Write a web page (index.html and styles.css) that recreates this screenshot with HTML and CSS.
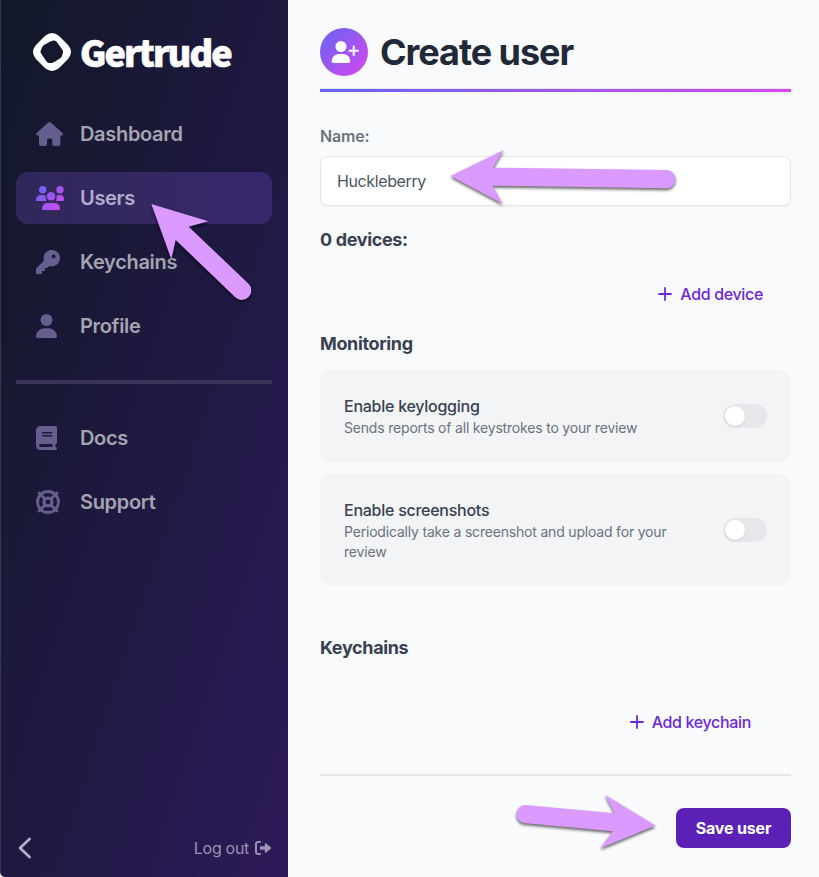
FILE: index.html
```html
<!DOCTYPE html>
<html lang="en">
<head>
<meta charset="utf-8">
<title>Gertrude</title>
<link rel="stylesheet" href="styles.css">
</head>
<body>
<div class="app">
  <aside class="sidebar">
    <div class="brand">
      <svg class="brand-mark" viewBox="0 0 38 38"><path fill="#fff" fill-rule="evenodd" d="M12.200 2.700Q19-2.700 25.800 2.700L35.300 12.200Q40.700 19 35.300 25.800L25.800 35.300Q19 40.700 12.200 35.300L2.700 25.800Q-2.700 19 2.700 12.200ZM18.500 8L11.300 11.700Q9.500 12.700 9 14.500L7.700 17.800Q7.300 19.200 8.100 20.500L13.300 28.300Q14.500 30 16.300 30L18.500 29.900Q20 29.800 21.300 29L27.200 25.300Q28.500 24.400 29 22.700L29.900 19.900Q30.300 18.300 29.400 16.800L23.800 9Q22.800 7.800 21.200 7.600Q19.700 7.400 18.500 8Z"/></svg>
      <span class="brand-name">Gertrude</span>
    </div>
    <nav class="nav">
      <a class="item"><svg class="icon" width="28" height="24" viewBox="0 0 28 24"><path fill="currentColor" d="M12.300.5Q13.500-.5 14.700.5L26.500 11Q27.500 12.200 26.300 13.400H24.300V22Q24.300 24 22.300 24H18.300Q16.300 24 16.300 22V18Q16.300 16.500 14.800 16.500H12.500Q11 16.500 11 18V22Q11 24 9 24H5Q3 24 3 22V13.400H1Q-.5 12.500.6 11Z"/></svg><span>Dashboard</span></a>
      <a class="item active"><svg class="icon" width="28" height="24" viewBox="0 0 28 24"><defs><linearGradient id="users" x1="0" y1="0" x2="28" y2="24" gradientUnits="userSpaceOnUse"><stop stop-color="#6366f1"/><stop offset="1" stop-color="#d946ef"/></linearGradient></defs><g fill="url(#users)"><circle cx="6.700" cy="3.700" r="3.700"/><circle cx="24" cy="3.700" r="3.700"/><circle cx="15" cy="10.300" r="4.300"/><path d="M1.200 15Q0 15 0 13.800Q.3 9 5 9H7.500Q9 9 9.700 9.500Q9 12.500 10.500 15ZM20 15Q21 12.500 20.500 9.700Q21.500 9 23 9H24.500Q28 9 28 13.500Q28 15 27 15ZM11.500 17H18.500Q23.500 17 24 22.500Q24 24 22.500 24H7.500Q6 24 6 22.500Q6.500 17 11.500 17Z"/></g></svg><span>Users</span></a>
      <a class="item"><svg class="icon" width="24" height="24" viewBox="0 0 512 512"><path fill="currentColor" fill-rule="evenodd" d="M336 352c97.200 0 176-78.800 176-176S433.200 0 336 0S160 78.800 160 176c0 18.700 2.900 36.800 8.300 53.700L7 391c-4.500 4.500-7 10.600-7 17v80c0 13.300 10.700 24 24 24h80c13.300 0 24-10.700 24-24V448h40c13.300 0 24-10.700 24-24V384h40c6.400 0 12.500-2.500 17-7l33.300-33.300c16.900 5.400 35 8.300 53.700 8.300zM376 96a40 40 0 1 1 0 80 40 40 0 1 1 0-80z"/></svg><span>Keychains</span></a>
      <a class="item"><svg class="icon" width="21" height="24" viewBox="0 0 448 512"><g fill="currentColor"><circle cx="224" cy="128" r="128"/><path d="M178.300 304C79.800 304 0 383.800 0 482.300C0 498.700 13.300 512 29.700 512H418.300c16.400 0 29.700-13.300 29.700-29.700C448 383.800 368.200 304 269.700 304H178.300z"/></g></svg><span>Profile</span></a>
    </nav>
    <div class="rule"></div>
    <nav class="nav">
      <a class="item"><svg class="icon" width="21" height="24" viewBox="0 0 448 512"><path fill="currentColor" fill-rule="evenodd" d="M96 0C43 0 0 43 0 96V416c0 53 43 96 96 96H416c17.700 0 32-14.300 32-32s-14.300-32-32-32V384c17.700 0 32-14.300 32-32V32c0-17.700-14.300-32-32-32H96zm0 384H352v64H96c-17.700 0-32-14.300-32-32s14.300-32 32-32zm32-240c0-8.800 7.200-16 16-16H336c8.800 0 16 7.200 16 16s-7.200 16-16 16H144c-8.800 0-16-7.200-16-16zm16 48H336c8.800 0 16 7.200 16 16s-7.200 16-16 16H144c-8.800 0-16-7.200-16-16s7.200-16 16-16z"/></svg><span>Docs</span></a>
      <a class="item"><svg class="icon" width="24" height="24" viewBox="0 0 24 24"><g fill="none" stroke="currentColor"><circle cx="12" cy="12" r="10.500" stroke-width="2.800"/><circle cx="12" cy="12" r="4" stroke-width="3.200"/><path stroke-width="2.800" stroke-linecap="round" d="M3 3L8.800 8.800M21 3L15.200 8.800M3 21L8.800 15.200M21 21L15.200 15.200"/></g></svg><span>Support</span></a>
    </nav>
    <div class="side-foot">
      <svg width="16" height="22" viewBox="0 0 16 22"><path d="M13.500 2L4 11L13.500 20" fill="none" stroke="#b5afc4" stroke-width="2.800" stroke-linecap="round" stroke-linejoin="round"/></svg>
      <a class="logout"><span>Log out</span><svg width="17" height="14" viewBox="0 0 17 14"><path d="M5 1H3Q1 1 1 3V11Q1 13 3 13H5" fill="none" stroke="currentColor" stroke-width="2" stroke-linecap="round"/><path fill="currentColor" d="M5.500 5.300H9.800V3Q10.200 1.600 11.300 2.400L16 6.400Q16.500 7 16 7.600L11.300 11.600Q10.200 12.400 9.800 11V8.700H5.500Q5 8.700 5 8.200V5.800Q5 5.300 5.500 5.300Z"/></svg></a>
    </div>
  </aside>
  <main class="main">
    <header class="head">
      <span class="badge"><svg width="28" height="22" viewBox="0 0 28 22"><g fill="#fff"><circle cx="10" cy="5.500" r="5.500"/><path d="M7.500 13H12.500Q18.600 13.500 19.300 20Q19.300 22 17.500 22H2.300Q.6 22 .6 20Q1.500 13.500 7.500 13Z"/></g><path d="M22.700 5.500V14M18.500 9.700H27" stroke="#fff" stroke-width="2" stroke-linecap="round"/></svg></span>
      <h1>Create user</h1>
    </header>
    <div class="head-line"></div>
    <label class="label" for="name">Name:</label>
    <input class="input" id="name" type="text" value="Huckleberry">
    <h2>0 devices:</h2>
    <div class="action device"><a class="add"><svg width="14" height="14" viewBox="0 0 14 14"><path d="M7 1V13M1 7H13" stroke="currentColor" stroke-width="1.800" stroke-linecap="round"/></svg><span>Add device</span></a></div>
    <h2>Monitoring</h2>
    <section class="cards">
      <div class="card"><div class="copy"><h3>Enable keylogging</h3><p>Sends reports of all keystrokes to your review</p></div><span class="toggle"></span></div>
      <div class="card"><div class="copy"><h3>Enable screenshots</h3><p>Periodically take a screenshot and upload for your review</p></div><span class="toggle"></span></div>
    </section>
    <h2>Keychains</h2>
    <div class="action keychain"><a class="add"><svg width="14" height="14" viewBox="0 0 14 14"><path d="M7 1V13M1 7H13" stroke="currentColor" stroke-width="1.800" stroke-linecap="round"/></svg><span>Add keychain</span></a></div>
    <footer class="foot"><button class="save">Save user</button></footer>
  </main>
</div>
<svg class="arrows" viewBox="0 0 819 877">
  <path d="M151.300 204L208.300 221.300L188.700 226.700L248.300 283.500A9.300 9.300 0 0 1 235.200 297.300L175.700 240L171.300 259.300Z"/>
  <path d="M450.500 176L503.700 150L493 167.700L666.500 170A9.100 9.100 0 0 1 666.500 188.200L492.700 185.700L502.700 203.700Z"/>
  <path d="M655.500 825.600L605 794.700L614.700 813.300L524.800 805A9.100 9.100 0 0 0 523.800 823L612.700 831.300L600.300 848.300Z"/>
</svg>
</body>
</html>
```
FILE: styles.css
```css
* { box-sizing: border-box; margin: 0; padding: 0; }
body { background: #f9fafc; font-family: Inter, "Liberation Sans", sans-serif; }
.app { display: flex; height: 877px; overflow: hidden; }

.sidebar {
  width: 288px; height: 877px; flex: none; padding: 28px 16px 16px 15px;
  display: flex; flex-direction: column;
  border-left: 1px solid #343850; border-bottom-left-radius: 5px;
  background: linear-gradient(to bottom right, #111827, #2c1a59);
}
.brand { display: flex; align-items: center; gap: 9px; height: 48px; padding-left: 17px; margin-bottom: 32px; }
.brand-mark { width: 38px; height: 38px; }
.brand-name { color: #fff; font-family: "Noto Sans CJK SC", "Noto Sans", sans-serif; font-weight: 900; font-size: 36px; letter-spacing: -1.9px; line-height: 48px; padding-bottom: 3px; -webkit-text-stroke: .7px #fff; }
.nav { display: flex; flex-direction: column; gap: 12px; }
.item { display: flex; align-items: center; height: 52px; padding-left: 20px; border-radius: 12px; color: #a7a4b1; font-size: 20px; font-weight: 600; letter-spacing: -.32px; }
.item .icon { flex: none; color: #665e8e; }
.item span { width: 180px; margin-left: auto; margin-right: 12px; }
.item.active { background: linear-gradient(to right, #30285a, #39276c); color: #b5accb; }
.rule { height: 4px; margin: 28px 0; background: #3b3459; }
.side-foot { display: flex; align-items: center; justify-content: space-between; margin-top: auto; height: 26px; }
.logout { display: flex; align-items: center; gap: 6px; color: #9b92b0; font-size: 16px; letter-spacing: -.3px; }

.main { flex: 1; min-width: 0; padding: 28px 28px 0 32px; }
.head { display: flex; align-items: center; gap: 12px; height: 48px; }
.badge { width: 48px; height: 48px; border-radius: 50%; padding-left: 1px; display: flex; align-items: center; justify-content: center; background: linear-gradient(to bottom right, #6366f1, #d946ef); }
h1 { color: #1f2937; font-size: 36px; font-weight: 700; letter-spacing: -1.05px; line-height: 48px; }
.head-line { height: 4px; margin-top: 12px; border-top: 1px solid #e5e7eb; background: linear-gradient(to right, #6366f1, #d946ef); background-clip: padding-box; }
.label { display: block; margin-top: 32px; color: #6b7280; font-size: 16px; font-weight: 600; line-height: 24px; letter-spacing: -.2px; }
.input { display: block; width: 100%; height: 50px; margin-top: 8px; padding: 0 16px; border: 1px solid #e5e7eb; border-radius: 8px; background: #fff; color: #4b5563; font: 16px Inter, sans-serif; letter-spacing: -.38px; box-shadow: 0 1px 2px rgba(0,0,0,.05); outline: none; }
h2 { color: #374151; font-size: 18px; font-weight: 700; line-height: 28px; letter-spacing: -.36px; }
.input + h2 { margin-top: 20px; }
.action { display: flex; justify-content: flex-end; color: #6d28d9; font-size: 16px; font-weight: 500; line-height: 24px; letter-spacing: -.34px; }
.add { display: flex; align-items: center; gap: 8px; }
.device { padding: 28px 28px 24px; }
.keychain { padding: 48px 40px 40px; }
.cards { display: flex; flex-direction: column; gap: 12px; margin: 12px 0 48px; }
.card { display: flex; align-items: center; justify-content: space-between; gap: 24px; padding: 24px; border-radius: 12px; background: #f3f4f6; }
.copy { width: 350px; }
h3 { color: #374151; font-size: 16px; font-weight: 500; line-height: 24px; letter-spacing: -.26px; }
.card p { color: #6b7280; font-size: 14px; line-height: 20px; letter-spacing: -.19px; }
.toggle { width: 44px; height: 24px; flex: none; padding: 2px; border-radius: 12px; background: #e5e7eb; }
.toggle::before { content: ""; display: block; width: 20px; height: 20px; border-radius: 50%; background: #fff; box-shadow: 0 1px 2px rgba(0,0,0,.1); }
.foot { display: flex; justify-content: flex-end; padding-top: 32px; border-top: 2px solid #e5e7eb; }
.save { width: 115px; height: 40px; border: 0; border-radius: 8px; background: #5b21b6; color: #fff; font: 700 16px Inter, sans-serif; letter-spacing: -.15px; }
.arrows { position: absolute; left: 0; top: 0; width: 819px; height: 877px; pointer-events: none; fill: #da9aff; filter: drop-shadow(0 2px 1.500px rgba(0,0,0,.6)); }
```
